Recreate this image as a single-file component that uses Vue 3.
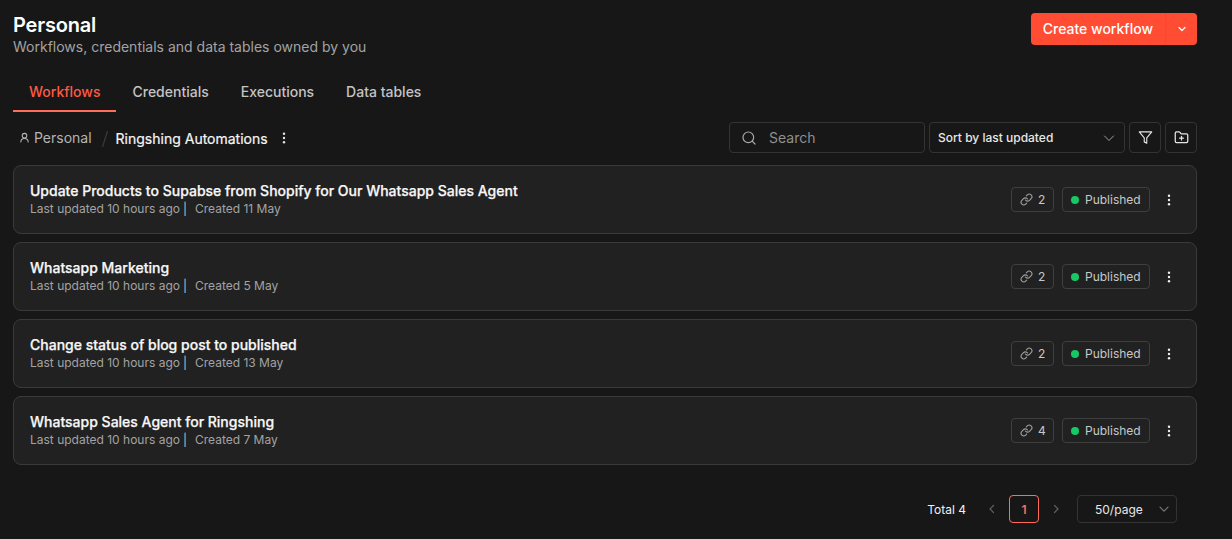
<script setup>
const tabs = ["Workflows", "Credentials", "Executions", "Data tables"];

const workflows = [
  { name: "Update Products to Supabse from Shopify for Our Whatsapp Sales Agent", created: "11 May", links: 2 },
  { name: "Whatsapp Marketing", created: "5 May", links: 2 },
  { name: "Change status of blog post to published", created: "13 May", links: 2 },
  { name: "Whatsapp Sales Agent for Ringshing", created: "7 May", links: 4 },
];
</script>

<template>
  <div class="page">
    <header class="top">
      <div>
        <h1>Personal</h1>
        <p class="subtitle">Workflows, credentials and data tables owned by you</p>
      </div>
      <div class="create">
        <span class="create-label">Create workflow</span>
        <span class="create-arrow">
          <svg width="12" height="12" viewBox="0 0 12 12" fill="none" stroke="#fff" stroke-width="1.3" stroke-linecap="round" stroke-linejoin="round"><path d="M3 4.5 6 7.5 9 4.5" /></svg>
        </span>
      </div>
    </header>

    <nav class="tabs">
      <span v-for="(tab, i) in tabs" :key="tab" class="tab" :class="{ active: i === 0 }">{{ tab }}</span>
    </nav>

    <div class="toolbar">
      <div class="crumbs">
        <svg class="user" width="11" height="11" viewBox="0 0 24 24" fill="none" stroke="#b8b8b8" stroke-width="2.2" stroke-linecap="round" stroke-linejoin="round"><circle cx="12" cy="8" r="5" /><path d="M4 22c0-5 3.5-8 8-8s8 3 8 8" /></svg>
        <span class="crumb-root">Personal</span>
        <svg class="crumb-sep" width="8" height="18" viewBox="0 0 8 18" fill="none" stroke="#3c3c3c" stroke-width="1.2"><path d="M6.5 1 1.5 17" /></svg>
        <span class="crumb-current">Ringshing Automations</span>
        <svg class="dots crumb-dots" width="16" height="16" viewBox="0 0 16 16" fill="#e6e6e6"><circle cx="8" cy="3.8" r="1.2" /><circle cx="8" cy="8" r="1.2" /><circle cx="8" cy="12.2" r="1.2" /></svg>
      </div>
      <div class="controls">
        <div class="search">
          <svg width="16" height="16" viewBox="0 0 24 24" fill="none" stroke="#a8a8a8" stroke-width="1.8" stroke-linecap="round"><circle cx="11" cy="11" r="8" /><path d="m21 21-4.3-4.3" /></svg>
          <span>Search</span>
        </div>
        <div class="sort">
          <span>Sort by last updated</span>
          <svg width="14" height="14" viewBox="0 0 14 14" fill="none" stroke="#a0a0a0" stroke-width="1" stroke-linecap="round" stroke-linejoin="round"><path d="M2.5 5 7 9.5 11.5 5" /></svg>
        </div>
        <div class="icon-btn">
          <svg width="15" height="15" viewBox="0 0 24 24" fill="none" stroke="#e6e6e6" stroke-width="1.8" stroke-linecap="round" stroke-linejoin="round"><path d="M22 3H2l8 9.46V19l4 2v-8.54z" /></svg>
        </div>
        <div class="icon-btn">
          <svg width="15" height="15" viewBox="0 0 24 24" fill="none" stroke="#e6e6e6" stroke-width="2" stroke-linecap="round" stroke-linejoin="round"><path d="M12 10v6M9 13h6" /><path d="M20 20a2 2 0 0 0 2-2V8a2 2 0 0 0-2-2h-7.9a2 2 0 0 1-1.69-.9L9.6 3.9A2 2 0 0 0 7.93 3H4a2 2 0 0 0-2 2v13a2 2 0 0 0 2 2z" /></svg>
        </div>
      </div>
    </div>

    <div class="list">
      <div v-for="w in workflows" :key="w.name" class="card">
        <div class="card-text">
          <div class="card-name">{{ w.name }}</div>
          <div class="card-meta">
            <span>Last updated 10 hours ago</span>
            <span class="sep">|</span>
            <span>Created {{ w.created }}</span>
          </div>
        </div>
        <div class="card-side">
          <div class="chip links">
            <svg width="13" height="13" viewBox="0 0 24 24" fill="none" stroke="#a0a0a0" stroke-width="2" stroke-linecap="round" stroke-linejoin="round"><path d="M10 13a5 5 0 0 0 7.54.54l3-3a5 5 0 0 0-7.07-7.07l-1.72 1.71" /><path d="M14 11a5 5 0 0 0-7.54-.54l-3 3a5 5 0 0 0 7.07 7.07l1.71-1.71" /></svg>
            <span>{{ w.links }}</span>
          </div>
          <div class="chip status">
            <i class="dot"></i>
            <span>Published</span>
          </div>
          <svg class="dots" width="16" height="16" viewBox="0 0 16 16" fill="#f0f0f0"><circle cx="8" cy="3.8" r="1.2" /><circle cx="8" cy="8" r="1.2" /><circle cx="8" cy="12.2" r="1.2" /></svg>
        </div>
      </div>
    </div>

    <footer class="pager">
      <span class="total">Total 4</span>
      <svg class="arrow" width="12" height="12" viewBox="0 0 12 12" fill="none" stroke="#5e5e5e" stroke-width="1.2" stroke-linecap="round" stroke-linejoin="round"><path d="M7.5 2.5 4 6l3.5 3.5" /></svg>
      <span class="page-num">1</span>
      <svg class="arrow" width="12" height="12" viewBox="0 0 12 12" fill="none" stroke="#5e5e5e" stroke-width="1.2" stroke-linecap="round" stroke-linejoin="round"><path d="M4.5 2.5 8 6l-3.5 3.5" /></svg>
      <div class="per-page">
        <span>50/page</span>
        <svg width="12" height="12" viewBox="0 0 12 12" fill="none" stroke="#7a7a7a" stroke-width="1.1" stroke-linecap="round" stroke-linejoin="round"><path d="M2 4.2 6 8.2l4-4" /></svg>
      </div>
    </footer>
  </div>
</template>

<style>
html,
body {
  background: #171717;
}
</style>

<style scoped>
.page {
  box-sizing: border-box;
  width: 1232px;
  height: 539px;
  padding: 13px 35px 0 13px;
  background: #171717;
  font-family: Inter, "Noto Sans", sans-serif;
  color: #f5f5f5;
  overflow: hidden;
}

.top {
  display: flex;
  justify-content: space-between;
  align-items: flex-start;
  height: 45px;
}

h1 {
  margin: 0;
  font-size: 20px;
  line-height: 24px;
  font-weight: 600;
  letter-spacing: -0.2px;
  color: #fff;
}

.subtitle {
  margin: 0;
  font-size: 14px;
  line-height: 20px;
  color: #a3a3a3;
}

.create {
  display: flex;
  height: 32px;
  background: #ff4c33;
  border-radius: 4px;
  color: #fff;
  font-size: 14px;
  font-weight: 500;
}

.create-label {
  display: flex;
  align-items: center;
  padding: 0 12px 1px;
  border-right: 1px solid #f2492f;
}

.create-arrow {
  display: flex;
  align-items: center;
  justify-content: center;
  width: 31px;
  padding-bottom: 1px;
}

.tabs {
  display: flex;
  height: 36px;
  margin-top: 16px;
}

.tab {
  padding: 10px 16px 0;
  height: 26px;
  font-size: 14px;
  line-height: 16px;
  font-weight: 500;
  color: #c4c4c4;
}

.tab.active {
  color: #ff5a45;
  border-bottom: 2px solid #ff6d5a;
}

.toolbar {
  display: flex;
  justify-content: space-between;
  align-items: center;
  height: 31px;
  margin-top: 12px;
}

.crumbs {
  display: flex;
  align-items: center;
  padding-left: 6px;
  font-size: 14px;
}

.crumb-root {
  margin-left: 4px;
  color: #b4b4b4;
}

.crumb-sep {
  margin: 3px 7px 0 9px;
}

.crumb-current {
  margin-top: 1px;
  font-weight: 400;
  color: #f5f5f5;
  -webkit-text-stroke: 0.2px #f5f5f5;
}

.crumb-dots {
  margin-left: 8px;
}

.controls {
  display: flex;
  gap: 4px;
}

.search,
.sort,
.icon-btn {
  box-sizing: border-box;
  display: flex;
  align-items: center;
  height: 31px;
  border: 1px solid #333;
  border-radius: 4px;
}

.search {
  gap: 12px;
  width: 196px;
  padding-left: 11px;
  font-size: 14px;
  color: #8f8f8f;
}

.sort {
  justify-content: space-between;
  width: 196px;
  padding: 0 8px;
  font-size: 12px;
  font-weight: 500;
  color: #e8e8e8;
}

.icon-btn {
  justify-content: center;
  width: 32px;
}

.list {
  display: flex;
  flex-direction: column;
  gap: 8px;
  margin-top: 12px;
}

.card {
  box-sizing: border-box;
  display: flex;
  justify-content: space-between;
  align-items: center;
  height: 69px;
  padding: 0 19px 0 16px;
  background: #212121;
  border: 1px solid #3a3a3a;
  border-radius: 8px;
}

.card-name {
  margin-bottom: 2px;
  font-size: 14px;
  line-height: 16px;
  font-weight: 500;
  color: #f7f7f7;
  -webkit-text-stroke: 0.25px #f7f7f7;
}

.card-meta {
  display: flex;
  font-size: 12px;
  line-height: 16px;
  color: #a3a3a3;
}

.sep {
  margin: 0 8px 0 3px;
  color: #c0c0c0;
}

.card-side {
  display: flex;
  align-items: center;
  gap: 8px;
}

.chip {
  box-sizing: border-box;
  display: flex;
  align-items: center;
  height: 25px;
  border: 1px solid #3f3f3f;
  border-radius: 4px;
  font-size: 12px;
  color: #c8c8c8;
}

.links {
  gap: 5px;
  width: 43px;
  padding-left: 8px;
}

.status {
  gap: 6px;
  width: 88px;
  padding-left: 8px;
}

.dot {
  width: 8px;
  height: 8px;
  border-radius: 50%;
  background: #17c964;
}

.card-side .dots {
  margin-left: 3px;
}

.pager {
  display: flex;
  justify-content: flex-end;
  align-items: center;
  height: 28px;
  margin-top: 30px;
  padding-right: 20px;
  font-size: 12px;
}

.total {
  margin-right: 20px;
  color: #f0f0f0;
}

.page-num {
  box-sizing: border-box;
  display: flex;
  align-items: center;
  justify-content: center;
  width: 30px;
  height: 28px;
  margin: 0 11px;
  border: 1px solid #ff6d5a;
  border-radius: 4px;
  color: #ff6d5a;
  font-weight: 600;
}

.per-page {
  box-sizing: border-box;
  display: flex;
  align-items: center;
  justify-content: space-between;
  width: 100px;
  height: 28px;
  margin-left: 15px;
  padding: 0 6px 0 17px;
  border: 1px solid #333;
  border-radius: 4px;
  color: #e8e8e8;
}
</style>
